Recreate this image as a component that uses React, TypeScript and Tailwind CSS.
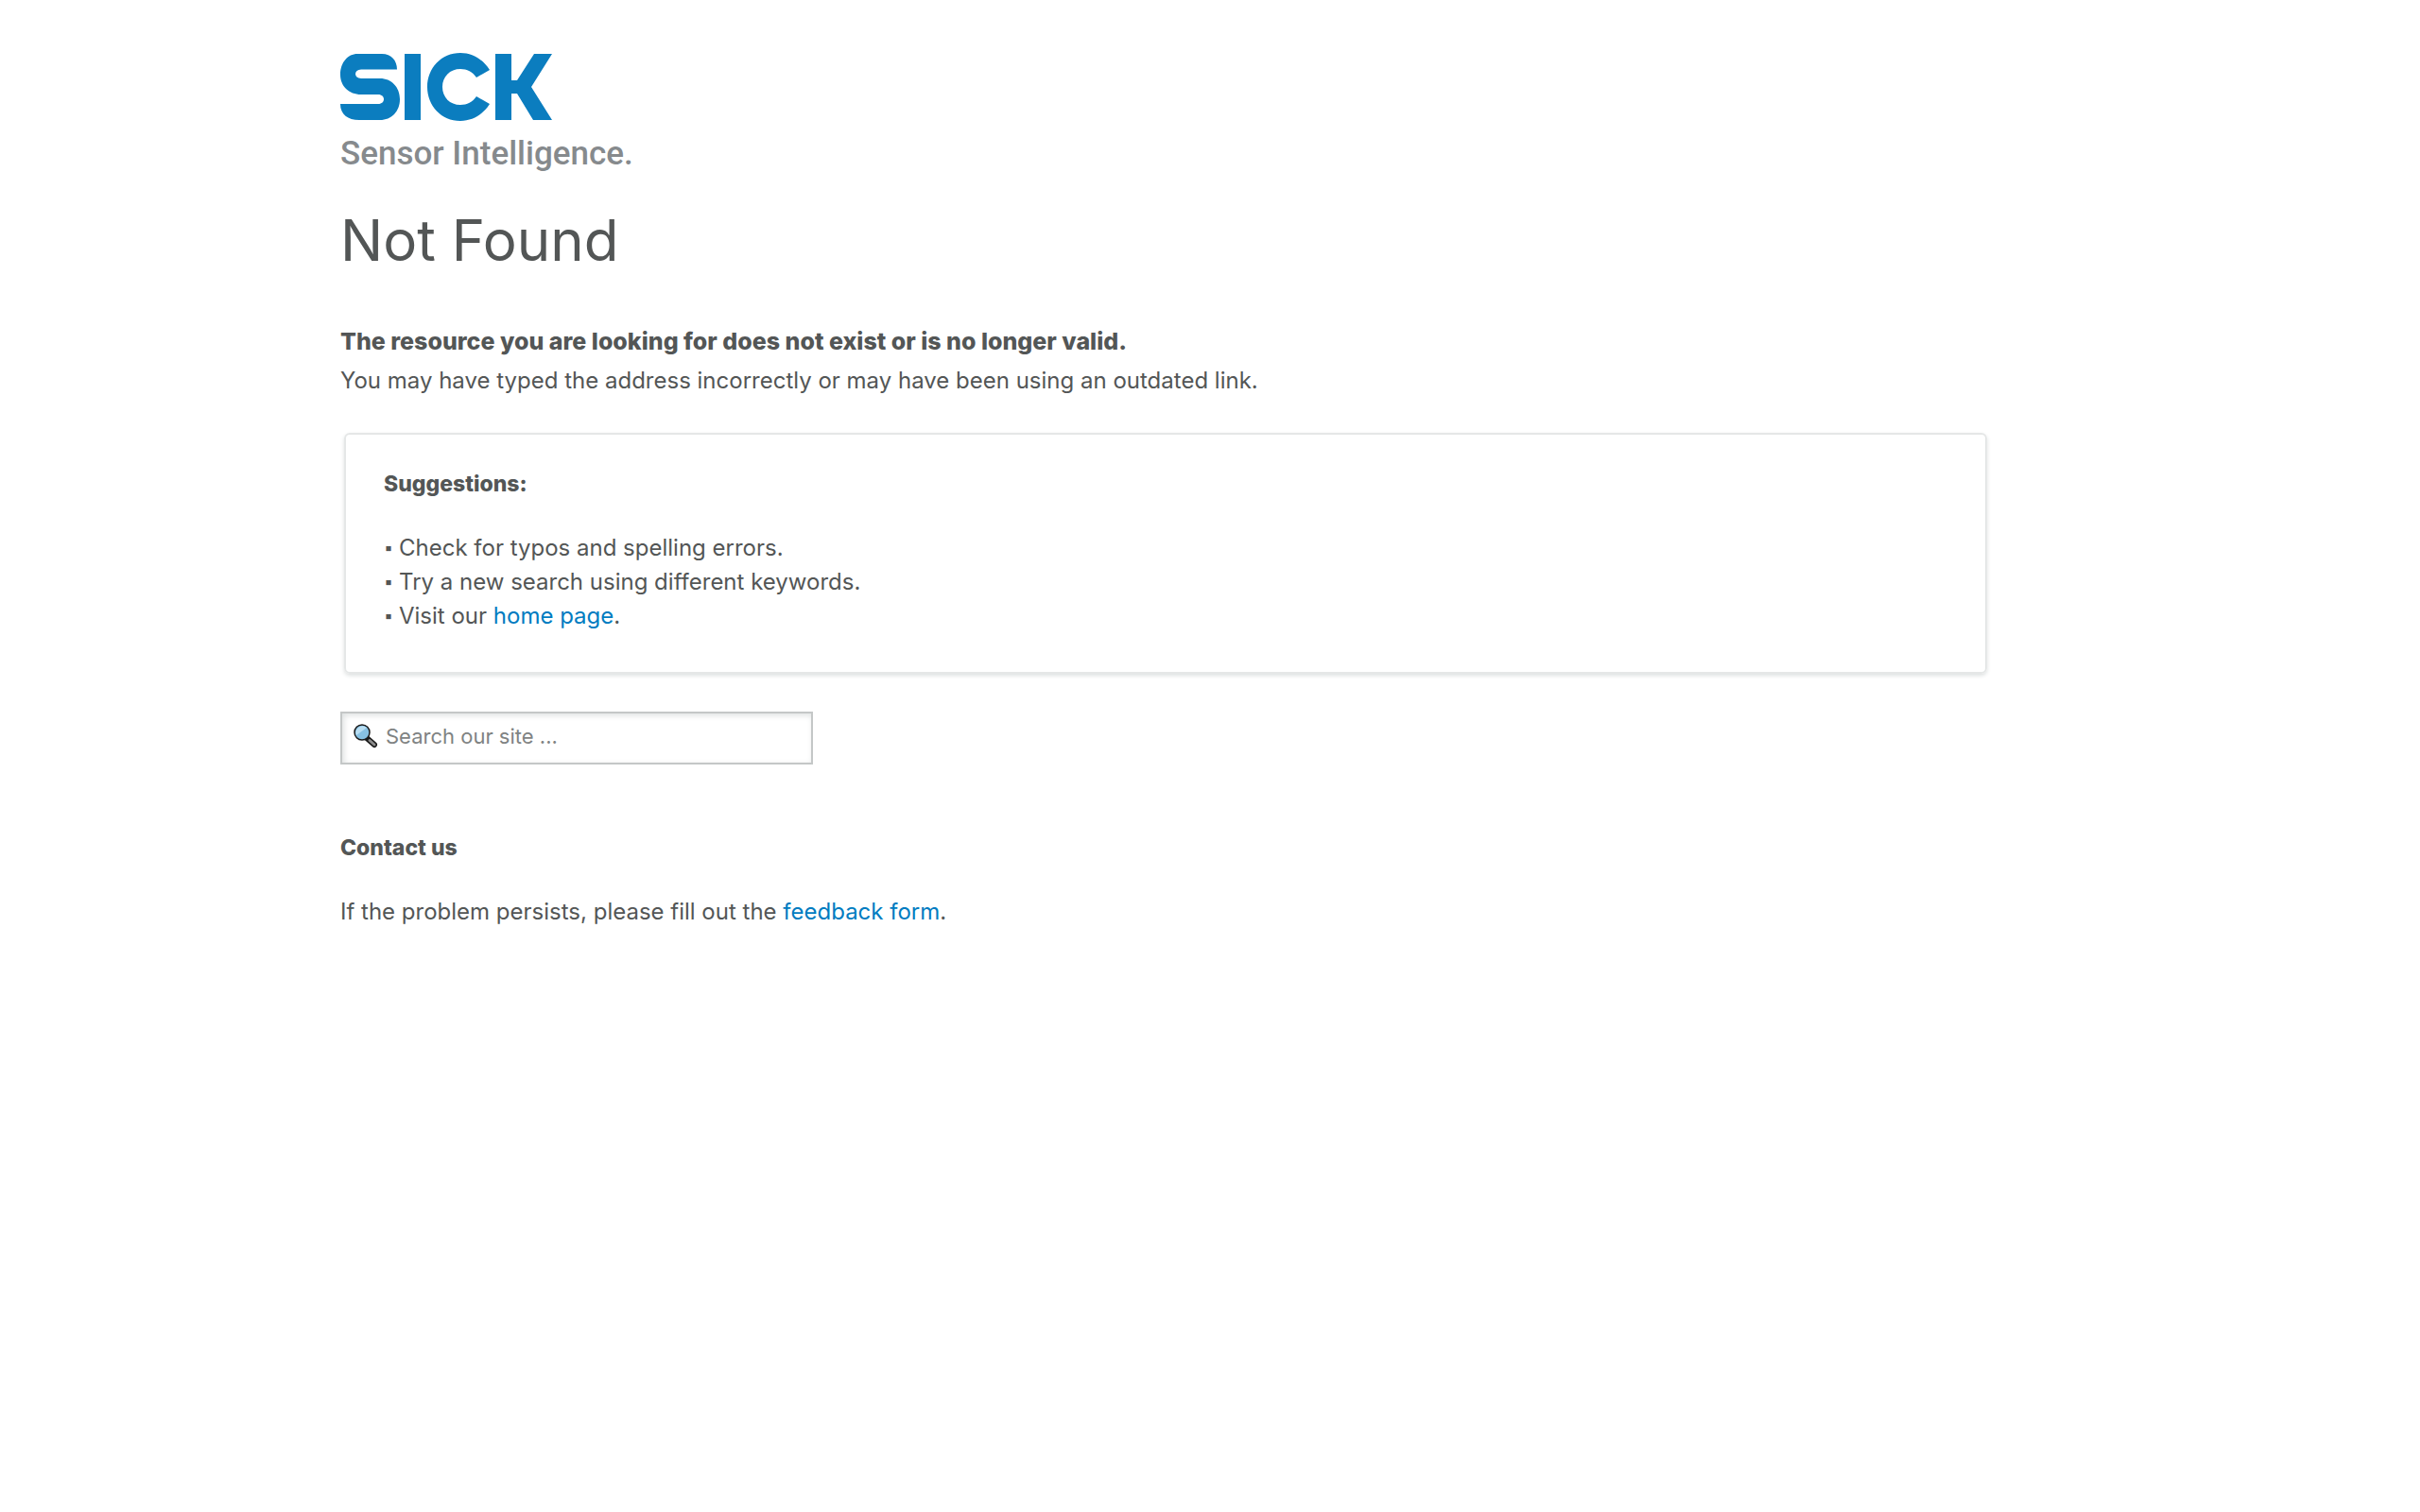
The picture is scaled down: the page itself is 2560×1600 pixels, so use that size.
import React from 'react';

const suggestions = [
  'Check for typos and spelling errors.',
  'Try a new search using different keywords.',
];

const Logo: React.FC = () => (
  <svg width="312" height="126" viewBox="0 0 312 126" role="img" aria-label="SICK Sensor Intelligence.">
    <g fill="#0b7dbf">
      <path d="M18 1H44C54 1 60 8 60 17.500H22C14 17.500 14 27 22 27H42C54 27 63 36 63 49C63 62 54 71 42 71H20C8 71 0 65 0 54H40C48 54 48 44 40 44H22C9 44 0 35 0 23C0 10 8 1 18 1Z" />
      <path d="M68 1H85V71H68Z" />
      <path d="M158 18C151 7 140 0 127 0C107 0 92 16 92 36C92 56 107 72 127 72C140 72 151 65 158 54L144 46C140 52 134 55 127 55C116 55 108 47 108 36C108 25 116 17 127 17C134 17 140 20 144 26Z" />
      <path d="M164 1H181V29H187L205 1H224L202 36L224 71H204L187 43H181V71H164Z" />
    </g>
    <text x="0" y="118" fill="#868a8d" fontFamily="Roboto, sans-serif" fontSize="35" fontWeight="500">
      Sensor Intelligence.
    </text>
  </svg>
);

const SearchIcon: React.FC = () => (
  <svg width="26" height="26" viewBox="0 0 26 26" aria-hidden="true">
    <path d="M14 15L22 22" stroke="#1a1a1a" strokeWidth="6" strokeLinecap="round" />
    <path d="M17 17.500L22 22" stroke="#8b8b8b" strokeWidth="3" strokeLinecap="round" />
    <circle cx="9" cy="9" r="8" fill="#87c1e3" stroke="#1a1a1a" strokeWidth="1.5" />
    <path d="M3 12A7 7 0 0 1 14 4Z" fill="#b9def2" />
  </svg>
);

const Suggestion: React.FC<{ children: React.ReactNode }> = ({ children }) => (
  <li className="flex items-center">
    <span className="w-4 shrink-0 text-[18px] leading-none">▪</span>
    <span>{children}</span>
  </li>
);

const App: React.FC = () => {
  return (
    <main className="min-h-screen bg-white pl-[360px] pr-[454px] pt-14 font-['Inter',sans-serif] text-2xl leading-9 text-[#535656]">
      <Logo />

      <h1 className="mt-[30px] text-[60px] leading-[84px]">Not Found</h1>

      <div className="mt-11 leading-[42px]">
        <h2 className="text-[25px] font-extrabold">The resource you are looking for does not exist or is no longer valid.</h2>
        <p>You may have typed the address incorrectly or may have been using an outdated link.</p>
      </div>

      <section className="mx-1 mt-[34px] rounded-md border-2 border-[#e5e7e7] px-10 pb-[41px] pt-[34px] shadow-[0_2px_4px_#dde0e0]">
        <h3 className="text-[23px] font-extrabold">Suggestions:</h3>
        <ul className="mt-8">
          {suggestions.map((text) => (
            <Suggestion key={text}>{text}</Suggestion>
          ))}
          <Suggestion>
            Visit our <a href="#home" className="text-[#007cc1]">home page</a>.
          </Suggestion>
        </ul>
      </section>

      <form role="search" className="mt-10" onSubmit={(e) => e.preventDefault()}>
        <label className="flex h-14 w-[500px] items-center gap-2 border-2 border-[#c4c7c7] pb-1 pl-3 shadow-[inset_2px_2px_6px_#dde0e0]">
          <SearchIcon />
          <input
            type="text"
            aria-label="Search our site"
            placeholder="Search our site ..."
            className="min-w-0 flex-1 bg-transparent text-[22px] outline-none placeholder:text-[#7f8383]"
          />
        </label>
      </form>

      <section className="mt-[70px]">
        <h3 className="text-[23px] font-extrabold">Contact us</h3>
        <p className="mt-8">
          If the problem persists, please fill out the <a href="#feedback" className="text-[#007cc1]">feedback form</a>.
        </p>
      </section>
    </main>
  );
};

export default App;
